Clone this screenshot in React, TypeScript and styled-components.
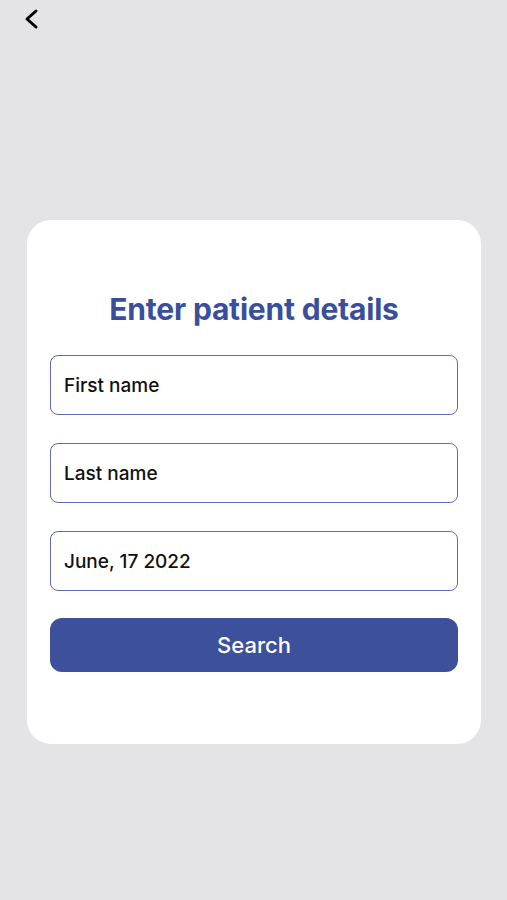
import styled, { createGlobalStyle } from "styled-components"

const GlobalStyle = createGlobalStyle`
  html, body {
    margin: 0;
    padding: 0;
    background: #e4e4e6;
    font-family: Inter, "Noto Sans", "Liberation Sans", sans-serif;
  }
`

const Page = styled.div`
  min-height: 900px;
  display: flex;
  flex-direction: column;
  background: #e4e4e6;
`

const Header = styled.div`
  height: 40px;
  display: flex;
  align-items: flex-start;
  padding-left: 20px;
`

const BackButton = styled.button`
  background: none;
  border: none;
  padding: 0;
  margin-top: 6px;
  width: 24px;
  height: 26px;
  cursor: pointer;
`

const Card = styled.div`
  margin: 180px 26px 0 27px;
  background: #ffffff;
  border-radius: 24px;
  padding: 71px 23px 72px;
  display: flex;
  flex-direction: column;
`

const Title = styled.h1`
  margin: 0 0 28px;
  text-align: center;
  font-size: 30px;
  line-height: 36px;
  font-weight: 700;
  color: #3a4f9c;
  letter-spacing: -0.2px;
`

const Fields = styled.div`
  display: flex;
  flex-direction: column;
  gap: 28px;
`

const Field = styled.div`
  height: 60px;
  box-sizing: border-box;
  border: 1.5px solid #5e6db3;
  border-radius: 8px;
  display: flex;
  align-items: center;
  padding: 0 13px;
  font-size: 19px;
  font-weight: 500;
  color: #111111;
`

const SearchButton = styled.button`
  margin-top: 27px;
  height: 54px;
  border: none;
  border-radius: 12px;
  background: #3d509b;
  color: #ffffff;
  font-family: inherit;
  font-size: 22px;
  font-weight: 500;
  cursor: pointer;
`

const fields = ["First name", "Last name", "June, 17 2022"]

export default function App() {
  return (
    <Page>
      <GlobalStyle />
      <Header>
        <BackButton aria-label="Back">
          <svg width="24" height="26" viewBox="0 0 24 26">
            <path
              d="M16 5 L7 13 L16 21"
              fill="none"
              stroke="#000"
              strokeWidth="3"
              strokeLinecap="round"
              strokeLinejoin="round"
            />
          </svg>
        </BackButton>
      </Header>
      <Card>
        <Title>Enter patient details</Title>
        <Fields>
          {fields.map((f) => (
            <Field key={f}>{f}</Field>
          ))}
        </Fields>
        <SearchButton>Search</SearchButton>
      </Card>
    </Page>
  )
}
